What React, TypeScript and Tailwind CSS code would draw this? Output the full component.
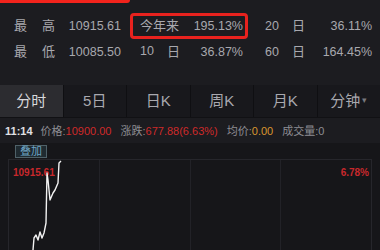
import React from 'react';

const tabs = ['分时', '5日', '日K', '周K', '月K', '分钟'];

function StatRow({
  l1,
  l2,
  value,
  midLabel,
  midValue,
  rLabel,
  rValue,
  boxed,
}: {
  l1: string;
  l2: string;
  value: string;
  midLabel: React.ReactNode;
  midValue: string;
  rLabel: string;
  rValue: string;
  boxed?: boolean;
}) {
  return (
    <div className="flex items-center h-[26px] pl-[14px]">
      <div className="w-[41px] flex justify-between text-[13px]">
        <span>{l1}</span>
        <span>{l2}</span>
      </div>
      <div className="w-[66px] text-right text-[12.5px]">{value}</div>
      <div
        className={`ml-[9px] w-[118px] h-[26px] flex items-center justify-between pl-[7px] pr-[2px] rounded-[4px] border-[3px] ${
          boxed ? 'border-[#e8221e]' : 'border-transparent'
        }`}
      >
        <span className="text-[13px]">{midLabel}</span>
        <span className="text-[12.5px]">{midValue}</span>
      </div>
      <div className="ml-[17px] flex items-center text-[13px]">
        <span className="w-[27px] text-[12.5px]">{rLabel}</span>
        <span>日</span>
      </div>
      <div className="w-[67px] text-right text-[12.5px]">{rValue}</div>
    </div>
  );
}

export default function App() {
  return (
    <div
      className="w-[380px] h-[250px] overflow-hidden bg-[#1c1c20] text-[#a8a8ae] flex flex-col"
      style={{ fontFamily: '"Liberation Sans", "Noto Sans CJK SC", sans-serif' }}
    >
      <div className="h-[3px] w-[130px] bg-[#f2231c] rounded-br-[3px]" />

      <div className="pt-[10px] flex flex-col">
        <StatRow
          l1="最"
          l2="高"
          value="10915.61"
          midLabel="今年来"
          midValue="195.13%"
          rLabel="20"
          rValue="36.11%"
          boxed
        />
        <StatRow
          l1="最"
          l2="低"
          value="10085.50"
          midLabel={
            <span className="flex">
              <span className="w-[27px] text-[12.5px]">10</span>
              <span>日</span>
            </span>
          }
          midValue="36.87%"
          rLabel="60"
          rValue="164.45%"
        />
      </div>

      <div className="mt-[20px] h-[33px] flex border-b border-[#111114]">
        {tabs.map((t, i) => (
          <div
            key={t}
            className={`flex-1 flex items-center justify-center text-[15px] ${
              i === 0 ? 'bg-[#2c2c30] text-[#d8d8dc]' : 'bg-[#18181c] text-[#a9a9af] border-l border-[#0f0f12]'
            }`}
          >
            {t}
            {i === 5 && <span className="ml-[2px] text-[9px] text-[#77777d]">▾</span>}
          </div>
        ))}
      </div>

      <div className="h-[25px] flex items-center pl-[5px] pt-[2px] text-[11px] text-[#8d8d93] whitespace-nowrap">
        <span className="text-[#e0e0e4] font-bold">11:14</span>
        <span className="ml-[8px]">价格:</span>
        <span className="text-[#cf2a2a]">10900.00</span>
        <span className="ml-[9px]">涨跌:</span>
        <span className="text-[#cf2a2a]">677.88(6.63%)</span>
        <span className="ml-[9px]">均价:</span>
        <span className="text-[#d9962f]">0.00</span>
        <span className="ml-[9px]">成交量:0</span>
      </div>

      <div className="flex-1 bg-[#161619] flex flex-col">
        <div className="h-[16px] flex items-center pl-[15px]">
          <span className="px-[4px] h-[13px] leading-[11px] text-[11px] border border-[#4f6168] bg-[#1f2a30] text-[#6ea4c4]">
            叠加
          </span>
        </div>
        <div className="relative flex-1 mx-[8px] border-t border-x border-[#26262b] flex">
          <div className="flex-1 border-r border-[#222227]" />
          <div className="flex-1 border-r border-[#222227]" />
          <div className="flex-1 border-r border-[#222227]" />
          <div className="flex-1" />
          <span className="absolute left-[4px] top-[5px] text-[10px] font-bold text-[#c8282c]">10915.61</span>
          <span className="absolute right-[2px] top-[5px] text-[10px] font-bold text-[#c8282c]">6.78%</span>
          <svg className="absolute left-0 top-0" width="364" height="90" viewBox="0 0 364 90">
            <polyline
              fill="none"
              stroke="#f2f2f2"
              strokeWidth="1.4"
              strokeLinejoin="round"
              points="24,90 25,78 27,75 29,80 31,72 33,78 35,73 37,63 38,13 39,20 41,40 44,33 46,30 49,23 50,3 52,1"
            />
          </svg>
        </div>
      </div>
    </div>
  );
}
